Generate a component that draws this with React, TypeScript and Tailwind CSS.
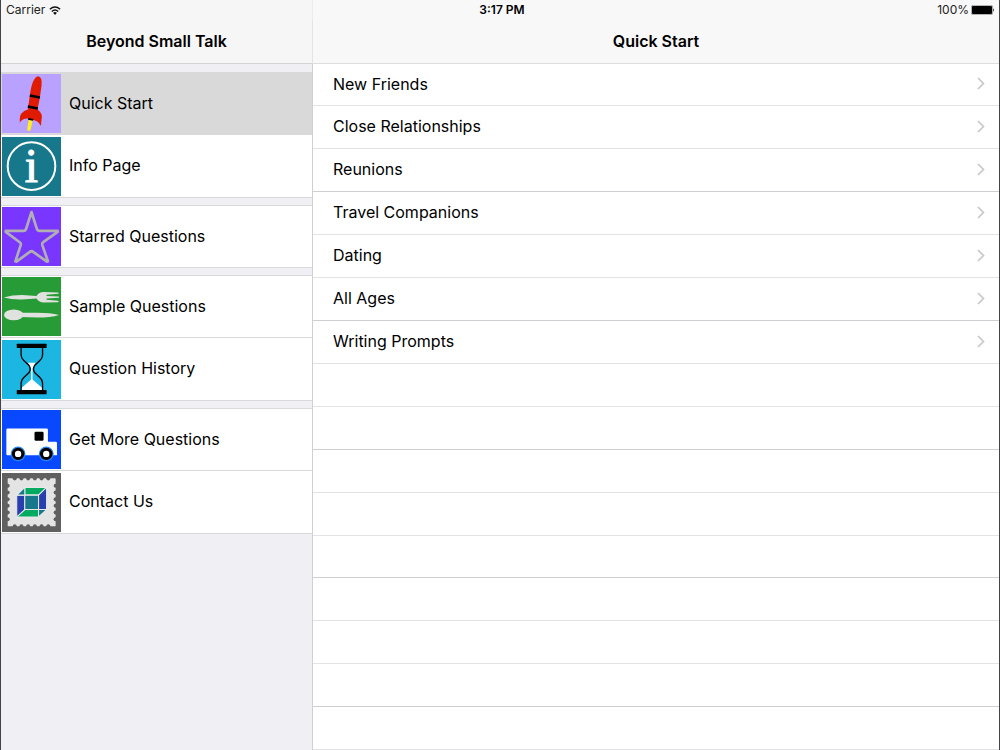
import type { ReactNode } from "react";

type MenuItem = { label: string; icon: ReactNode; selected?: boolean };

function RocketIcon() {
  return (
    <svg viewBox="0 0 176 176" className="size-full bg-[#b8a1ff]" aria-hidden="true">
      <path d="M80 134 L92 136 L85 168 Q79 172 75 166 Z" fill="#fff01a" />
      <path
        d="M83 64 Q90 12 107 7 Q121 8 118 34 L113 70 L106 106 Q119 117 119 126 L116 155 Q108 139 94 137 L77 133 Q62 132 53 145 Q52 124 58 118 Q65 109 77 106 Z"
        fill="#e01b00"
      />
      <path d="M83 64 L113 70 M77 97 L107 103" stroke="#000" strokeWidth="8" />
      <path d="M78 134 L93 137" stroke="#000" strokeWidth="5" />
    </svg>
  );
}

function InfoIcon() {
  return (
    <svg viewBox="0 0 176 176" className="size-full bg-[#16788a]" aria-hidden="true">
      <circle cx="88" cy="87" r="71" fill="none" stroke="#fff" strokeWidth="6" />
      <text
        x="88"
        y="134"
        textAnchor="middle"
        fontSize="143"
        fill="#fff"
        stroke="#fff"
        strokeWidth="3"
        className="font-['Liberation_Serif',serif]"
      >
        i
      </text>
    </svg>
  );
}

function StarIcon() {
  return (
    <svg viewBox="0 0 176 176" className="size-full bg-[#7836ff]" aria-hidden="true">
      <path
        d="M88 15 L104 65 Q106 71 112 71 L166 71 L166 74 L123 105 Q119 108 120 113 L137 162 L134 163 L93 134 Q88 130 83 134 L43 163 L40 162 L56 113 Q57 108 53 105 L11 74 L11 71 L65 71 Q70 71 72 65 Z"
        fill="none"
        stroke="#b0aeb2"
        strokeWidth="8"
        strokeLinejoin="round"
      />
    </svg>
  );
}

function CutleryIcon() {
  return (
    <svg viewBox="0 0 176 176" className="size-full bg-[#279b35]" aria-hidden="true">
      <g fill="#e0e2e0">
        <path d="M5 61 Q30 54 60 54 L103 57 Q110 45 124 45 L167 46 Q172 47 168 50 L133 53 V57 L169 58 Q173 60 169 62 L133 64 V68 L167 71 Q172 74 166 75 L122 76 Q109 74 103 64 L60 67 Q30 68 5 61 Z" />
        <ellipse cx="35" cy="113" rx="29" ry="16" />
        <path d="M54 107 L105 107 Q145 107 170 113 Q145 121 105 121 L54 119 Z" />
      </g>
    </svg>
  );
}

function HourglassIcon() {
  return (
    <svg viewBox="0 0 176 176" className="size-full bg-[#1cb6e2]" aria-hidden="true">
      <path d="M77 68 H100 L91 86 V118 L121 144 V151 H57 V144 L87 118 V86 Z" fill="#fff" />
      <path
        d="M57 22 V45 Q57 54 65 61 L80 75 Q88 87 80 98 L65 112 Q57 120 57 128 V151 M121 22 V45 Q121 54 113 61 L98 75 Q90 87 98 98 L113 112 Q121 120 121 128 V151"
        fill="none"
        stroke="#000"
        strokeWidth="4"
      />
      <rect x="44" y="11" width="89" height="13" rx="2" />
      <rect x="44" y="149" width="89" height="13" rx="2" />
    </svg>
  );
}

function TruckIcon() {
  return (
    <svg viewBox="0 0 176 176" className="size-full bg-[#0849ff]" aria-hidden="true">
      <path d="M17 55 H133 Q137 55 137 59 V95 H160 Q164 95 164 99 V135 H17 Q13 135 13 131 V59 Q13 55 17 55 Z" fill="#fff" />
      <rect x="97" y="65" width="27" height="27" rx="4" />
      {[48, 132].map((cx) => (
        <g key={cx}>
          <circle cx={cx} cy="131" r="22" fill="#2484f5" />
          <circle cx={cx} cy="131" r="14" fill="#fff" stroke="#000" strokeWidth="9" />
        </g>
      ))}
    </svg>
  );
}

function StampIcon() {
  const notches = [38, 58, 78, 98, 118, 138];
  return (
    <svg viewBox="0 0 176 176" className="size-full bg-[#606060]" aria-hidden="true">
      <rect x="17" y="16" width="143" height="143" rx="2" fill="#e4e4e4" />
      <g fill="#606060">
        {notches.map((n) => (
          <g key={n}>
            <circle cx={n} cy="16" r="6" />
            <circle cx={n} cy="159" r="6" />
            <circle cx="17" cy={n} r="6" />
            <circle cx="160" cy={n} r="6" />
          </g>
        ))}
      </g>
      <g stroke="#e9e9e9" strokeWidth="3">
        <path d="M68 43 H133 L109 66 H68 Z" fill="#00aa60" />
        <path d="M44 131 L68 109 H109 V131 Z" fill="#00aa60" />
        <path d="M44 66 H68 V109 L44 131 Z" fill="#2a3fae" />
        <path d="M133 43 V109 H109 V66 Z" fill="#2a3fae" />
        <path d="M68 66 H109 V109 H68 Z M68 43 V66 H44 Z M109 109 H133 L109 131 Z" fill="#16788a" />
      </g>
    </svg>
  );
}

const menu: MenuItem[][] = [
  [
    { label: "Quick Start", icon: <RocketIcon />, selected: true },
    { label: "Info Page", icon: <InfoIcon /> },
  ],
  [{ label: "Starred Questions", icon: <StarIcon /> }],
  [
    { label: "Sample Questions", icon: <CutleryIcon /> },
    { label: "Question History", icon: <HourglassIcon /> },
  ],
  [
    { label: "Get More Questions", icon: <TruckIcon /> },
    { label: "Contact Us", icon: <StampIcon /> },
  ],
];

const topics = [
  "New Friends",
  "Close Relationships",
  "Reunions",
  "Travel Companions",
  "Dating",
  "All Ages",
  "Writing Prompts",
];

const emptyRows = Array.from({ length: 9 }, (_, i) => i);

function StatusBar() {
  return (
    <div className="grid h-5 grid-cols-[312px_1fr_312px] bg-[#f8f8f8] text-[12px] leading-5 text-[#222]">
      <div className="flex items-center gap-1 border-r border-[#ececee] bg-[#f6f6f6] pl-[5px]">
        <span>Carrier</span>
        <svg viewBox="0 0 36 28" className="h-[9px] w-3" role="img" aria-label="Wi-Fi">
          <path d="M2 10 Q18 -4 34 10 M8 17 Q18 8 28 17" fill="none" stroke="#111" strokeWidth="4.5" />
          <path d="M12 21 Q18 16 24 21 L18 28 Z" fill="#111" />
        </svg>
      </div>
      <div className="pl-1 text-center font-semibold text-black">3:17 PM</div>
      <div className="flex items-center justify-end gap-0.5 pr-1">
        <span>100%</span>
        <svg viewBox="0 0 72 30" className="h-[10px] w-6" role="img" aria-label="Battery full">
          <rect x="1" y="1" width="64" height="28" rx="5" fill="#fff" stroke="#777" strokeWidth="2" />
          <rect x="3" y="3" width="60" height="24" rx="3" />
          <path d="M67 10 Q72 15 67 20 Z" />
        </svg>
      </div>
    </div>
  );
}

export default function App() {
  return (
    <div className="flex min-h-screen flex-col border-x border-[#444446] bg-white font-[Inter,'Liberation_Sans',sans-serif] text-black">
      <StatusBar />

      <div className="flex flex-1">
        {/* Sidebar */}
        <aside className="flex w-[312px] shrink-0 flex-col bg-[#efeff4]">
          <header className="flex h-11 items-center justify-center border-r border-b border-r-[#e4e4e6] border-b-[#d4d4d6] bg-[#f6f6f6] pb-0.5">
            <h1 className="text-[16px] font-semibold">Beyond Small Talk</h1>
          </header>

          <nav className="flex flex-1 flex-col gap-[7px] border-r border-[#d0cfd4] pt-2">
            {menu.map((group) => (
              <div
                key={group[0].label}
                className="flex flex-col border-t border-[#d9d9dc] bg-white"
              >
                {group.map((item) => (
                  <button
                    key={item.label}
                    type="button"
                    className={
                      item.selected
                        ? "flex h-[62px] items-center gap-2 border-b border-[#d9d9d9] bg-[#d9d9d9] pl-px text-left"
                        : "flex h-[62px] items-center gap-2 border-b border-[#d9d9dc] pl-px text-left not-first:h-[63px]"
                    }
                  >
                    <span className="mb-px size-[59px] shrink-0 self-end">{item.icon}</span>
                    <span className="pb-0.5 text-[16px]">{item.label}</span>
                  </button>
                ))}
              </div>
            ))}
          </nav>
        </aside>

        {/* Detail */}
        <main className="flex min-w-0 flex-1 flex-col">
          <header className="flex h-11 items-center justify-center border-b border-[#dededf] bg-[#f8f8f8] pb-0.5">
            <h2 className="text-[16px] font-semibold">Quick Start</h2>
          </header>

          <ul className="flex flex-1 flex-col">
            {topics.map((topic) => (
              <li
                key={topic}
                className="h-[43px] border-b border-[#e3e3e5] first:h-[42px] nth-[3n]:border-[#cfced3]"
              >
                <a href="#" className="flex h-full items-center justify-between pr-3.5 pb-0.5 pl-5">
                  <span className="text-[16px]">{topic}</span>
                  <svg viewBox="0 0 8 13" className="h-[13px] w-2" aria-hidden="true">
                    <path d="M1 1 L6.5 6.5 L1 12" fill="none" stroke="#c7c7cc" strokeWidth="1.7" />
                  </svg>
                </a>
              </li>
            ))}
            {emptyRows.map((row) => (
              <li
                key={row}
                aria-hidden="true"
                className="flex-1 border-b border-[#e3e3e5] nth-[3n]:border-[#cfced3]"
              />
            ))}
          </ul>
        </main>
      </div>
    </div>
  );
}
